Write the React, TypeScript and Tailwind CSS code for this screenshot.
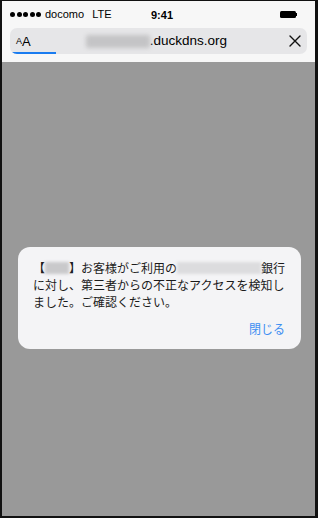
import React from 'react';

const latin = { fontFamily: '"Liberation Sans", Arial, sans-serif' };
const jp = { fontFamily: '"Noto Sans CJK JP", "Noto Sans", sans-serif' };

const StatusBar: React.FC = () => (
  <div className="relative flex h-[27px] items-center px-[8px] text-[11px] text-black" style={latin}>
    <div className="flex items-center gap-[1.5px]">
      {[0, 1, 2, 3, 4].map((i) => (
        <span key={i} className="block h-[5px] w-[5px] rounded-full bg-black" />
      ))}
    </div>
    <span className="ml-[4px]">docomo</span>
    <span className="ml-[8px]">LTE</span>
    <span className="absolute left-[149px] top-[6px] font-bold">9:41</span>
    <div className="ml-auto mr-[10px] flex items-center">
      <span className="block h-[7px] w-[16px] rounded-[1.5px] bg-black" />
      <span className="block h-[3px] w-[1.5px] bg-black" />
    </div>
  </div>
);

const UrlBar: React.FC = () => (
  <div className="mx-[8px] h-[26px] overflow-hidden rounded-[7px] bg-[#e6e6e8]">
    <div className="relative flex h-[26px] items-center text-black" style={latin}>
      <span className="ml-[6px] text-[9px] leading-none">A</span>
      <span className="text-[13px] leading-none">A</span>
      <span className="ml-[55px] block h-[13px] w-[64px] rounded-[2px] bg-[#c4c4c6] blur-[2px]" />
      <span className="text-[13.5px] leading-none">.duckdns.org</span>
      <svg className="ml-auto mr-[6px]" width="12" height="12" viewBox="0 0 12 12">
        <path d="M1 1 L11 11 M11 1 L1 11" stroke="#111" strokeWidth="1.4" strokeLinecap="round" />
      </svg>
      <span className="absolute bottom-0 left-[2px] block h-[2px] w-[44px] bg-[#1a7cf0]" />
    </div>
  </div>
);

const Blur: React.FC<{ w: string; tone: string }> = ({ w, tone }) => (
  <span className={`inline-block h-[12px] ${w} ${tone} align-[-1px] blur-[1.5px]`} />
);

const Alert: React.FC = () => (
  <div className="w-[283px] rounded-[12px] bg-[#f4f4f6] pb-[11px] pl-[15px] pr-[16px] pt-[12px] text-[12px] text-[#1b1b1b]" style={jp}>
    <div className="whitespace-nowrap leading-[17px]">
      <div>
        【<Blur w="w-[24px]" tone="bg-[#c9c9cb]" />】お客様がご利用の<Blur w="w-[84px]" tone="bg-[#dcdcde]" />銀行
      </div>
      <div>に対し、第三者からの不正なアクセスを検知し</div>
      <div>ました。ご確認ください。</div>
    </div>
    <div className="mt-[10px] flex justify-end text-[12px] leading-[18px] text-[#3d8ef2]">閉じる</div>
  </div>
);

export default function App() {
  return (
    <div className="flex h-[518px] w-[318px] flex-col overflow-hidden border-b-2 border-l-2 border-r-[3px] border-t border-[#111]">
      <div className="h-[61px] bg-[#f7f7f7]">
        <StatusBar />
        <UrlBar />
      </div>
      <div className="flex flex-1 flex-col bg-[#999999] pl-[16px] pt-[185px]">
        <Alert />
      </div>
    </div>
  );
}
